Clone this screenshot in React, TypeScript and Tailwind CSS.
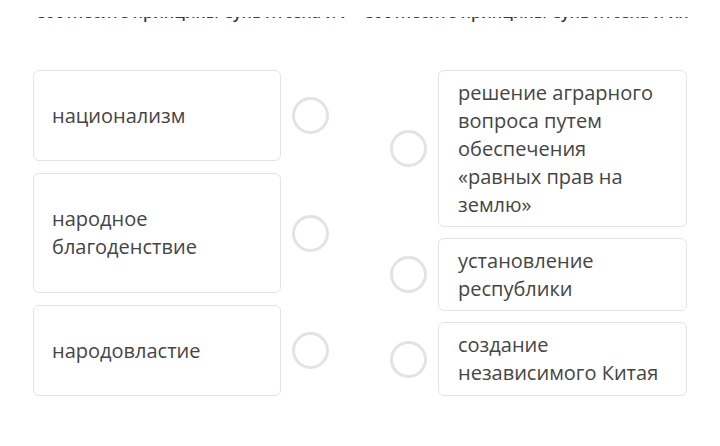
const left = [
  { text: "национализм", h: "h-[91px]" },
  { text: "народное благоденствие", h: "h-[120px]" },
  { text: "народовластие", h: "h-[91px]" },
];

const right = [
  { text: "решение аграрного вопроса путем обеспечения «равных прав на землю»", h: "h-[157px]" },
  { text: "установление республики", h: "h-[73px]" },
  { text: "создание независимого Китая", h: "h-[74px]" },
];

const question = "Соотнесите принципы Сунь Ятсена и их содержание";

function Circle() {
  return <div className="w-[37px] h-[37px] rounded-full border-[3px] border-[#e3e3e3] shrink-0" />;
}

export default function App() {
  return (
    <div className="w-[720px] h-[446px] bg-white overflow-hidden pt-[17px]" style={{ fontFamily: "'Open Sans', sans-serif" }}>
      <div className="h-[5px] overflow-hidden flex items-start gap-[18px] pl-[35px]">
        <div className="w-[310px] h-[5px] overflow-hidden shrink-0">
          <div className="-translate-y-[15px] text-[16px] leading-[20px] font-semibold text-[#3a3a3a] whitespace-nowrap">
            {question}
          </div>
        </div>
        <div className="w-[325px] h-[5px] overflow-hidden shrink-0">
          <div className="-translate-y-[15px] text-[16px] leading-[20px] font-semibold text-[#3a3a3a] whitespace-nowrap">
            {question}
          </div>
        </div>
      </div>

      <div className="flex mt-[48px] pl-[33px]">
        <div className="flex flex-col gap-[12px]">
          {left.map((c) => (
            <div key={c.text} className="flex items-center">
              <div className={`w-[248px] ${c.h} border border-[#e4e4e4] rounded-[6px] flex items-center px-[18px] text-[20px] leading-[28px] text-[#454545]`}>
                {c.text}
              </div>
              <div className="ml-[11px]">
                <Circle />
              </div>
            </div>
          ))}
        </div>

        <div className="flex flex-col gap-[11px] ml-[61px]">
          {right.map((c) => (
            <div key={c.text} className="flex items-center">
              <Circle />
              <div className={`ml-[11px] w-[249px] ${c.h} border border-[#e4e4e4] rounded-[6px] flex items-center px-[19px] text-[20px] leading-[28px] text-[#454545]`}>
                {c.text}
              </div>
            </div>
          ))}
        </div>
      </div>
    </div>
  );
}
